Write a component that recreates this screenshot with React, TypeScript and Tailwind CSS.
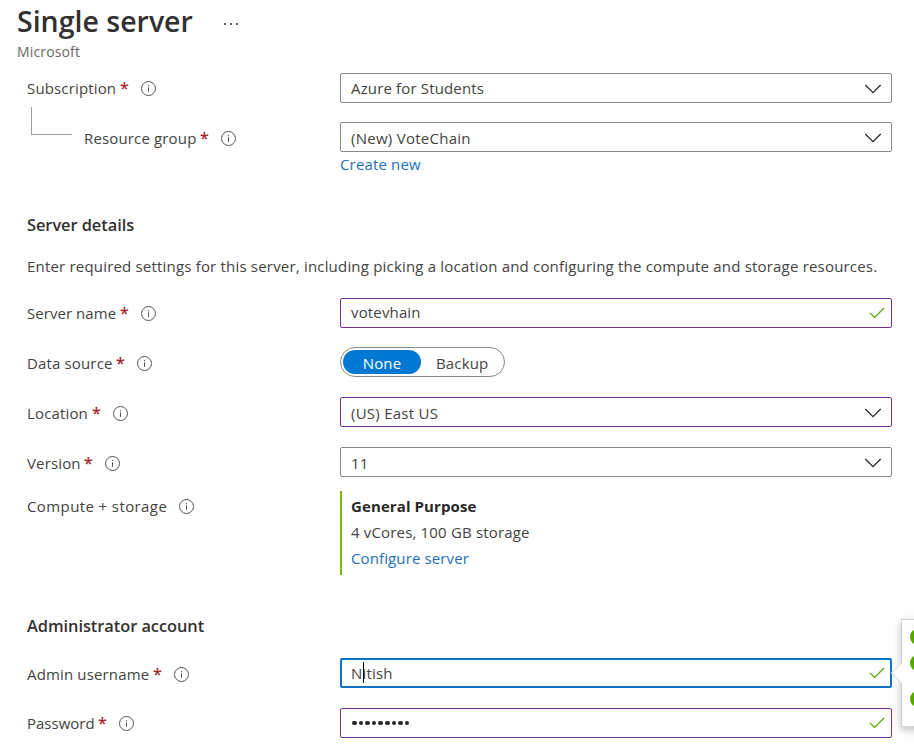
import type { ReactNode } from "react";

function InfoIcon() {
  return (
    <svg width="16" height="16" viewBox="0 0 16 16" fill="none" className="shrink-0">
      <circle cx="7.5" cy="8.5" r="7" stroke="#555453" strokeWidth="1" />
      <path d="M7.5 7.3V11.9" stroke="#555453" strokeWidth="1" />
      <path d="M7.5 5.1V6.2" stroke="#555453" strokeWidth="1.1" />
    </svg>
  );
}

function Chevron() {
  return (
    <svg width="18" height="10" viewBox="0 0 18 10" fill="none" className="mr-[9px] mt-px shrink-0">
      <path d="M1.3 1L9 8.6L16.7 1" stroke="#292827" strokeWidth="1.3" />
    </svg>
  );
}

function Check({ className = "mr-1.5" }: { className?: string }) {
  return (
    <svg width="16" height="12" viewBox="0 0 16 12" fill="none" className={`shrink-0 ${className}`}>
      <path d="M1 6L5.6 10.4L15 1" stroke="#57a300" strokeWidth="1.2" />
    </svg>
  );
}

interface LabelProps {
  text: string;
  width: string;
  tracking?: string;
  required?: boolean;
  offset?: string;
}

function Label({ text, width, tracking = "", required = true, offset = "" }: LabelProps) {
  return (
    <div className={`flex h-[30px] items-center ${offset}`}>
      <span className={`${width} ${tracking} shrink-0 whitespace-nowrap`}>{text}</span>
      {required ? (
        <span className="w-[25px] shrink-0 pl-[4px] text-[16px] font-semibold text-[#a4262c]">*</span>
      ) : (
        <span className="w-3 shrink-0" />
      )}
      <InfoIcon />
    </div>
  );
}

function Row({ label, children, className = "" }: { label: ReactNode; children: ReactNode; className?: string }) {
  return (
    <div className={`flex items-start ${className}`}>
      <div className="w-[340px] shrink-0 pl-[27px]">{label}</div>
      {children}
    </div>
  );
}

interface BoxProps {
  children: ReactNode;
  icon: ReactNode;
  border?: string;
  text?: string;
}

function Box({ children, icon, border = "border border-[#8a8886] pl-2.5", text = "" }: BoxProps) {
  return (
    <div className={`flex h-[30px] w-[552px] items-center justify-between rounded-[2px] ${border}`}>
      <span className={text}>{children}</span>
      {icon}
    </div>
  );
}

const purple = "border border-[#7a2f93] pl-2.5";

export default function App() {
  return (
    <div className="relative h-[746px] w-[914px] overflow-hidden bg-white font-['Open_Sans','Noto_Sans',sans-serif] text-[15px] leading-[20px] tracking-[0.15px] text-[#444342]">
      <header className="h-[73px] pl-[17px]">
        <div className="flex h-[43px] items-center">
          <h1 className="w-[207px] whitespace-nowrap pb-[2px] text-[28.5px] font-semibold leading-[40px] tracking-normal text-[#323130]">Single server</h1>
          <div className="mt-[4px] flex gap-1">
            <i className="size-[2px] rounded-full bg-[#323130]" />
            <i className="size-[2px] rounded-full bg-[#323130]" />
            <i className="size-[2px] rounded-full bg-[#323130]" />
          </div>
        </div>
        <p className="text-[14px] leading-[18px] text-[#6b6967]">Microsoft</p>
      </header>

      <Row label={<Label text="Subscription" width="w-[89px]" />}>
        <Box icon={<Chevron />}>Azure for Students</Box>
      </Row>
      <div className="flex h-[19px] pl-[31px]">
        <div className="mt-1 h-7 w-[41px] shrink-0 border-b border-l border-[#a19f9d]" />
      </div>
      <Row label={<div className="pl-[57px]"><Label text="Resource group" width="w-[112px]" offset="pt-[2px]" /></div>}>
        <Box icon={<Chevron />} text="pt-[2px] tracking-[0.27px]">(New) VoteChain</Box>
      </Row>
      <a className="ml-[340px] mt-[2px] block text-[#1f70b8]">Create new</a>

      <h2 className="ml-[27px] mt-[41px] text-[16.4px] font-semibold tracking-[-0.05px] text-[#323130]">Server details</h2>
      <p className="ml-[27px] mt-[21px] whitespace-nowrap tracking-[0.19px]">
        Enter required settings for this server, including picking a location and configuring the compute and storage resources.
      </p>

      <Row className="mt-[22px]" label={<Label text="Server name" width="w-[89px]" tracking="tracking-[0.05px]" />}>
        <Box icon={<Check />} border={purple} text="pb-[2px]">votevhain</Box>
      </Row>
      <Row className="mt-[19px]" label={<Label text="Data source" width="w-[85px]" offset="pt-[2px]" />}>
        <div className="flex h-[30px] w-[165px] items-center rounded-full border border-[#8a8886] pl-0.5">
          <div className="flex h-6 w-[78px] items-center justify-center rounded-full bg-[#0078d4] pt-[2px] font-medium text-white">None</div>
          <span className="ml-[15px] pt-[2px]">Backup</span>
        </div>
      </Row>
      <Row className="mt-[20px]" label={<Label text="Location" width="w-[61px]" offset="pt-[2px]" />}>
        <Box icon={<Chevron />} border={purple} text="pt-[2px] tracking-[0.25px]">(US) East US</Box>
      </Row>
      <Row className="mt-[20px]" label={<Label text="Version" width="w-[53px]" offset="pt-[2px]" />}>
        <Box icon={<Chevron />} text="pt-[2px]">11</Box>
      </Row>
      <Row className="mt-[14px]" label={<Label text="Compute + storage" width="w-[140px]" tracking="tracking-[0.4px]" required={false} />}>
        <div className="h-[84px] border-l-2 border-[#7fba00] pl-[9px] pt-[2px] leading-[26px]">
          <div className="font-bold tracking-[0.1px] text-[#292827]">General Purpose</div>
          <div className="tracking-[0.17px]">4 vCores, 100 GB storage</div>
          <a className="block tracking-[0.12px] text-[#1f70b8]">Configure server</a>
        </div>
      </Row>

      <h2 className="ml-[27px] mt-[41px] text-[16.4px] font-semibold tracking-[-0.05px] text-[#323130]">Administrator account</h2>
      <Row className="mt-[22px]" label={<Label text="Admin username" width="w-[122px]" offset="pt-[2px]" />}>
        <Box icon={<Check className="mr-[5px]" />} border="border-2 border-[#1073c6] pl-[9px]">
          <span className="relative tracking-[0.2px]">
            Nitish
            <span className="absolute left-[12px] top-[-1px] h-[21px] w-px bg-black" />
          </span>
        </Box>
      </Row>
      <Row className="mt-[20px]" label={<Label text="Password" width="w-[67px]" tracking="tracking-[0px]" />}>
        <Box icon={<Check />} border={purple}>
          <span className="flex gap-[2px] pl-px" aria-label="Password">
            {Array.from({ length: 9 }, (_, i) => (
              <i key={i} className="size-[4.6px] rounded-full bg-[#292827]" />
            ))}
          </span>
        </Box>
      </Row>

      <div className="absolute left-[901px] top-[619px] h-[108px] w-[40px] border border-[#d2d0ce] bg-white shadow-[0_3px_8px_rgba(0,0,0,0.25)]">
        <i className="absolute left-[-8px] top-[46px] size-[14px] rotate-45 border-b border-l border-[#e1dfdd] bg-white" />
        <i className="absolute left-2 top-[9px] size-4 rounded-full bg-[#57a300]" />
        <i className="absolute left-2 top-[35px] size-4 rounded-full bg-[#57a300]" />
        <i className="absolute left-2 top-[71px] size-4 rounded-full bg-[#57a300]" />
      </div>
    </div>
  );
}
